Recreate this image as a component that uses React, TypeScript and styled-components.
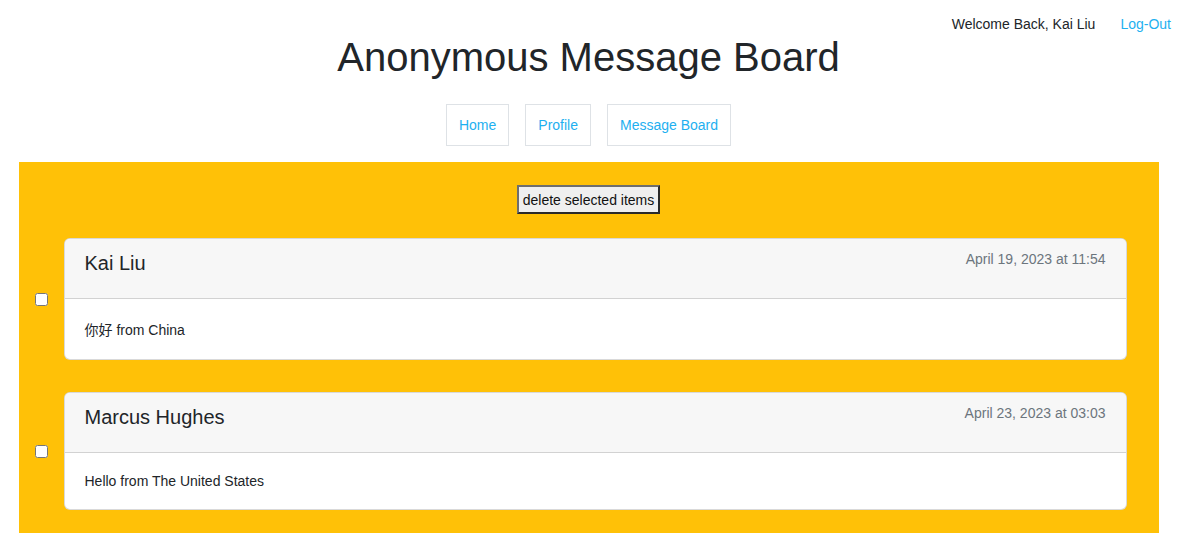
import React from "react";
import styled, { createGlobalStyle } from "styled-components";

const GlobalStyle = createGlobalStyle`
  html, body {
    margin: 0;
    padding: 0;
    background: #ffffff;
  }
  body {
    font-family: "Liberation Sans", "Noto Sans CJK SC", Arial, sans-serif;
    font-size: 14px;
    color: #212529;
  }
  * { box-sizing: border-box; }
`;

const Page = styled.div`
  padding-right: 4px;
  display: flex;
  flex-direction: column;
  align-items: center;
`;

const TopBar = styled.div`
  align-self: stretch;
  display: flex;
  justify-content: flex-end;
  align-items: center;
  gap: 25px;
  height: 35px;
  padding: 16px 6px 3px 0;
  line-height: normal;
`;

const Welcome = styled.span`
  color: #212529;
`;

const Link = styled.a`
  color: #1eb0f0;
  text-decoration: none;
  cursor: pointer;
`;

const Title = styled.h1`
  margin: 0;
  font-size: 40px;
  font-weight: 400;
  line-height: normal;
  color: #212529;
`;

const Nav = styled.nav`
  display: flex;
  gap: 16px;
  margin-top: 24px;
`;

const NavItem = styled.a`
  display: block;
  padding: 12px 12px;
  border: 1px solid #dee2e6;
  color: #1eb0f0;
  text-decoration: none;
  line-height: normal;
`;

const Panel = styled.main`
  width: 1140px;
  margin-top: 16px;
  background: #ffc107;
  padding: 23px 32px 23px 16px;
  display: flex;
  flex-direction: column;
`;

const DeleteButton = styled.button`
  align-self: center;
  margin: 0 0 24px 16px;
  font-family: "Liberation Sans", Arial, sans-serif;
  font-size: 14px;
  line-height: 16px;
  color: #111;
  background: #efefef;
  padding: 5px 4px 4px;
  border-style: solid;
  border-width: 2px;
  border-color: #6e6e6e #2a2a2a #2a2a2a #6e6e6e;
  border-radius: 0;
`;

const List = styled.div`
  display: flex;
  flex-direction: column;
  gap: 32px;
`;

const Row = styled.div`
  display: flex;
  align-items: center;
  gap: 16px;
`;

const Check = styled.input.attrs({ type: "checkbox" })`
  width: 13px;
  height: 13px;
  margin: 0;
  flex: none;
`;

const Card = styled.article`
  flex: 1;
  background: #ffffff;
  border: 1px solid rgba(0, 0, 0, 0.15);
  border-radius: 6px;
  overflow: hidden;
`;

const CardHeader = styled.header`
  display: flex;
  justify-content: space-between;
  align-items: flex-start;
  padding: 12px 20px 23px;
  background: #f7f7f7;
  border-bottom: 1px solid rgba(0, 0, 0, 0.15);
`;

const Name = styled.h5`
  margin: 1px 0 0;
  font-size: 20px;
  font-weight: 400;
  line-height: normal;
  color: #212529;
`;

const Stamp = styled.span`
  font-size: 14px;
  line-height: normal;
  color: #6c757d;
`;

const CardBody = styled.div`
  padding: 20px;
  line-height: normal;
  font-size: 14px;
  color: #212529;
`;

const messages = [
  { name: "Kai Liu", date: "April 19, 2023 at 11:54", text: "你好 from China" },
  {
    name: "Marcus Hughes",
    date: "April 23, 2023 at 03:03",
    text: "Hello from The United States",
  },
];

export default function App() {
  return (
    <>
      <GlobalStyle />
      <Page>
        <TopBar>
          <Welcome>Welcome Back, Kai Liu</Welcome>
          <Link>Log-Out</Link>
        </TopBar>
        <Title>Anonymous Message Board</Title>
        <Nav>
          <NavItem>Home</NavItem>
          <NavItem>Profile</NavItem>
          <NavItem>Message Board</NavItem>
        </Nav>
        <Panel>
          <DeleteButton>delete selected items</DeleteButton>
          <List>
            {messages.map((m) => (
              <Row key={m.name}>
                <Check />
                <Card>
                  <CardHeader>
                    <Name>{m.name}</Name>
                    <Stamp>{m.date}</Stamp>
                  </CardHeader>
                  <CardBody>{m.text}</CardBody>
                </Card>
              </Row>
            ))}
          </List>
        </Panel>
      </Page>
    </>
  );
}
